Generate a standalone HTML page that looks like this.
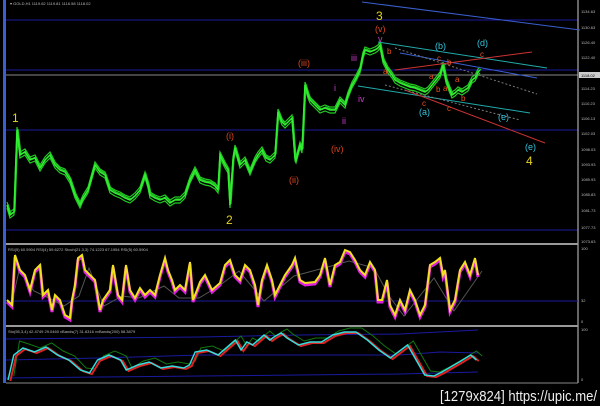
<!DOCTYPE html>
<html><head><meta charset="utf-8"><style>
html,body{margin:0;padding:0;background:#000;width:600px;height:406px;overflow:hidden}
svg{display:block}
text{font-family:"Liberation Sans",sans-serif}
</style></head><body>
<svg width="600" height="406" viewBox="0 0 600 406" xmlns="http://www.w3.org/2000/svg">
<defs>
<polyline id="pr" fill="none" points="7,205 10,215 14,212 17,130 20,155 25,152 30,160 35,158 40,168 45,160 50,155 55,165 60,170 65,172 70,180 75,195 80,205 83,198 88,190 95,165 100,172 105,175 110,190 115,193 120,195 125,198 130,200 135,196 140,190 145,175 148,185 150,195 155,198 160,200 165,198 170,203 175,200 180,200 185,195 190,180 195,170 200,180 205,182 210,183 215,186 218,190 220,155 225,165 228,170 230,205 233,160 235,148 240,165 245,160 250,172 255,160 258,155 262,150 266,158 270,160 275,155 278,112 282,122 285,125 290,120 292,118 295,158 296,160 300,145 302,150 305,85 308,95 310,100 315,105 320,110 325,108 330,110 335,110 340,100 345,105 348,95 352,85 356,78 360,70 363,55 365,50 370,52 375,50 378,48 380,45 383,60 388,70 392,75 395,80 400,83 405,85 410,87 415,88 420,90 425,92 428,90 432,85 436,80 440,75 443,65 446,80 449,88 452,95 455,93 458,90 462,92 465,90 468,88 472,80 475,78 478,72 480,70"/>
</defs>
<rect width="600" height="406" fill="#000"/>
<rect x="3" y="0" width="3" height="383" fill="#3a5fd0"/>
<g stroke="#1a1aa0" stroke-width="1">
<line x1="6" y1="20" x2="578" y2="20"/><line x1="6" y1="70" x2="578" y2="70"/>
<line x1="6" y1="130" x2="578" y2="130"/><line x1="6" y1="230" x2="578" y2="230"/>
</g>
<line x1="6" y1="75" x2="578" y2="75" stroke="#888" stroke-width="1"/>
<line x1="578" y1="0" x2="578" y2="383" stroke="#ccc" stroke-width="1"/>
<text x="10" y="5" font-size="4" fill="#bbb">▾ GOLD,H1  1119.62  1119.81  1116.58  1118.02</text>
<g stroke="#22cc22" stroke-width="1.2">
<use href="#pr" transform="translate(0,-3)"/>
<use href="#pr" transform="translate(0,3)"/>
<use href="#pr" transform="translate(1,-1)"/>
</g>
<use href="#pr" stroke="#33ee33" stroke-width="1.5"/>
<g stroke-width="1" fill="none">
<line x1="362" y1="2" x2="580" y2="30" stroke="#3a5fd0"/>
<line x1="378" y1="42" x2="547" y2="68" stroke="#2aa"/>
<line x1="358" y1="86" x2="530" y2="113" stroke="#2aa"/>
<line x1="400" y1="53" x2="537" y2="78" stroke="#3a5fd0"/>
<line x1="395" y1="70" x2="532" y2="52" stroke="#c33"/>
<line x1="405" y1="90" x2="545" y2="143" stroke="#c33"/>
<line x1="395" y1="48" x2="537" y2="94" stroke="#777" stroke-dasharray="2,2"/>
<line x1="385" y1="85" x2="520" y2="120" stroke="#777" stroke-dasharray="2,2"/>
</g>
<g font-size="12">
<text x="12" y="122" fill="#e6d21e">1</text>
<text x="226" y="224" fill="#e6d21e">2</text>
<text x="376" y="20" fill="#e6d21e">3</text>
<text x="526" y="165" fill="#e6d21e">4</text>
</g>
<g font-size="9" fill="#d9451e">
<text x="226" y="139">(i)</text><text x="289" y="183">(ii)</text><text x="298" y="66">(iii)</text>
<text x="331" y="152">(iv)</text><text x="375" y="32">(v)</text>
</g>
<g font-size="9" fill="#c83cc8">
<text x="378" y="42">v</text><text x="351" y="61">iii</text><text x="334" y="91">i</text>
<text x="342" y="124">ii</text><text x="358" y="102">iv</text>
</g>
<g font-size="9" fill="#33c6dd">
<text x="435" y="49">(b)</text><text x="477" y="46">(d)</text><text x="419" y="115">(a)</text>
<text x="498" y="120">(e)</text><text x="525" y="150">(e)</text>
</g>
<g font-size="8" fill="#e8501e">
<text x="387" y="54">b</text><text x="383" y="74">a</text><text x="429" y="79">a</text><text x="437" y="61">c</text>
<text x="447" y="65">b</text><text x="436" y="92">b</text><text x="443" y="91">a</text><text x="455" y="82">a</text>
<text x="422" y="106">c</text><text x="447" y="111">c</text><text x="461" y="101">b</text><text x="480" y="57">c</text>
</g>
<g font-size="4" fill="#bbb">
<text x="581" y="13">1134.63</text><text x="581" y="29">1130.63</text><text x="581" y="44">1126.40</text>
<text x="581" y="59">1122.40</text><text x="581" y="90">1114.23</text><text x="581" y="105">1110.23</text>
<text x="581" y="120">1106.13</text><text x="581" y="135">1102.03</text><text x="581" y="151">1098.03</text>
<text x="581" y="166">1093.93</text><text x="581" y="181">1089.93</text><text x="581" y="196">1085.83</text>
<text x="581" y="212">1081.73</text><text x="581" y="229">1077.73</text><text x="581" y="243">1073.63</text>
</g>
<rect x="579" y="72" width="21" height="6" fill="#ccc"/>
<text x="581" y="77" font-size="4" fill="#000">1118.02</text>
<rect x="6" y="243" width="572" height="2" fill="#999"/>
<rect x="6" y="325" width="572" height="2" fill="#999"/>
<line x1="6" y1="383" x2="578" y2="383" stroke="#888"/>
<text x="8" y="251" font-size="4" fill="#bbb">RSI(5) 60.5904  RSI(4) 59.6272  Stoch(21,3,3) 74.1223 67.1954  RSI(5) 60.5904</text>
<line x1="6" y1="301" x2="578" y2="301" stroke="#1a1aa0"/>
<g font-size="4" fill="#bbb"><text x="581" y="250">100</text><text x="581" y="302">32</text><text x="581" y="323">0</text></g>
<polyline fill="none" stroke="#555" stroke-width="1" transform="translate(4,6)" points="7,300 15,265 30,285 45,292 60,300 75,290 85,262 100,300 118,290 135,292 160,280 175,292 195,292 215,280 235,265 260,295 290,270 320,262 345,255 370,262 385,290 400,310 430,272 450,305 478,265"/>
<polyline fill="none" stroke="#e020e0" stroke-width="3" transform="translate(0,2)" points="7,300 12,305 15,255 20,270 25,275 30,290 35,270 40,265 43,295 48,290 52,310 55,295 60,300 65,315 70,318 72,300 75,285 78,258 82,255 85,270 90,275 95,280 100,310 103,300 110,290 113,265 118,295 122,300 126,265 130,290 135,298 140,288 145,295 150,290 155,295 160,275 165,258 168,270 172,280 175,290 180,285 185,290 190,262 193,300 197,290 200,282 205,275 212,290 220,283 225,265 230,260 235,275 240,280 245,265 250,270 255,285 258,305 262,280 267,265 272,280 275,295 280,285 285,275 292,265 295,258 300,280 305,283 315,282 320,275 325,258 330,285 335,265 340,262 345,250 350,252 355,260 360,270 365,275 370,262 375,270 378,300 382,300 387,280 390,305 395,315 400,300 405,310 410,290 415,300 420,315 425,305 430,265 435,262 440,258 443,275 445,270 450,310 455,300 460,270 465,262 470,275 475,258 478,275"/>
<polyline fill="none" stroke="#f0e020" stroke-width="2" points="7,300 12,305 15,255 20,270 25,275 30,290 35,270 40,265 43,295 48,290 52,310 55,295 60,300 65,315 70,318 72,300 75,285 78,258 82,255 85,270 90,275 95,280 100,310 103,300 110,290 113,265 118,295 122,300 126,265 130,290 135,298 140,288 145,295 150,290 155,295 160,275 165,258 168,270 172,280 175,290 180,285 185,290 190,262 193,300 197,290 200,282 205,275 212,290 220,283 225,265 230,260 235,275 240,280 245,265 250,270 255,285 258,305 262,280 267,265 272,280 275,295 280,285 285,275 292,265 295,258 300,280 305,283 315,282 320,275 325,258 330,285 335,265 340,262 345,250 350,252 355,260 360,270 365,275 370,262 375,270 378,300 382,300 387,280 390,305 395,315 400,300 405,310 410,290 415,300 420,315 425,305 430,265 435,262 440,258 443,275 445,270 450,310 455,300 460,270 465,262 470,275 475,258 478,275"/>
<text x="8" y="333" font-size="4" fill="#bbb">Sto(55,3,4) 42.4749 29.0460  vBands(7) 31.6316  vvBands(200) 58.3879</text>
<g font-size="4" fill="#bbb"><text x="581" y="331">100</text><text x="581" y="381">0</text></g>
<g fill="none" stroke="#1a1aa0" stroke-width="1">
<polyline points="6,339 100,338 200,337 300,335 400,334 478,330"/>
<polyline points="6,360 100,358 200,355 300,355 400,355 440,352 478,353"/>
<polyline points="6,378 100,377 200,376 300,375 400,374 478,372"/>
</g>
<g transform="scale(1.148,1)">
<polyline fill="none" stroke="#117711" stroke-width="1" vector-effect="non-scaling-stroke" transform="translate(5,-4)" points="7,380 12,345 20,348 30,352 40,347 50,355 60,360 70,372 78,373 85,360 95,355 105,360 110,372 120,365 130,362 140,368 150,366 160,368 165,365 170,352 180,350 190,355 200,345 205,340 210,350 215,342 220,345 230,335 235,340 240,336 245,333 250,338 260,345 270,342 280,342 290,335 300,332 310,332 320,340 330,350 340,358 355,345 360,355 370,375 378,376 385,372 400,362 410,355 415,360"/>
<polyline fill="none" stroke="#dd2222" stroke-width="2" vector-effect="non-scaling-stroke" transform="translate(2,1)" points="7,380 12,355 20,348 30,352 40,347 50,355 60,360 70,370 78,373 85,360 95,355 105,360 110,370 120,365 130,362 140,368 150,366 160,368 165,365 170,352 180,350 190,355 200,345 205,340 210,350 215,342 220,345 230,335 235,340 240,336 245,333 250,338 260,345 270,342 280,342 290,335 300,332 310,332 320,340 330,350 340,358 355,345 360,355 370,375 378,376 385,372 400,362 410,355 415,360"/>
<polyline fill="none" stroke="#33dddd" stroke-width="1.5" vector-effect="non-scaling-stroke" points="7,380 12,355 20,348 30,352 40,347 50,355 60,360 70,370 78,373 85,360 95,355 105,360 110,370 120,365 130,362 140,368 150,366 160,368 165,365 170,352 180,350 190,355 200,345 205,340 210,350 215,342 220,345 230,335 235,340 240,336 245,333 250,338 260,345 270,342 280,342 290,335 300,332 310,332 320,340 330,350 340,358 355,345 360,355 370,375 378,376 385,372 400,362 410,355 415,360"/>
</g>
<text x="440" y="401" font-size="15" fill="#eee" font-family="Liberation Sans Narrow,Liberation Sans,sans-serif" textLength="157" lengthAdjust="spacingAndGlyphs">[1279x824] https://upic.me/</text>
</svg>
</body></html>
